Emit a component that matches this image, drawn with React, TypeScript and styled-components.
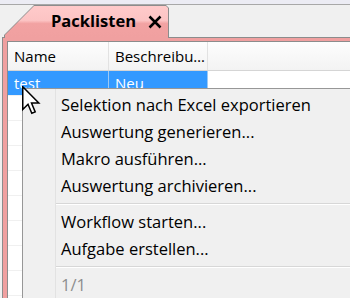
import styled, { createGlobalStyle } from "styled-components";

const GlobalStyle = createGlobalStyle`
  html, body {
    margin: 0;
    padding: 0;
    background: #f0f0f0;
    overflow: hidden;
  }
  body {
    width: 350px;
    height: 298px;
    font-family: "Open Sans", "Noto Sans", sans-serif;
  }
`;

const Screen = styled.div`
  position: relative;
  width: 350px;
  height: 298px;
  overflow: hidden;
  background: #f0f0f0;
`;

const TopStrip = styled.div`
  height: 4px;
  background: #ececf4;
  border-bottom: 1px solid #a8a8a8;
`;

const TabBar = styled.div`
  display: flex;
  align-items: flex-end;
  height: 32px;
  padding-left: 4px;
`;

const Tab = styled.div`
  position: relative;
  z-index: 2;
  width: 165px;
  height: 33px;
  margin-bottom: -1px;
  background: #8c8c8c;
  clip-path: polygon(0 30px, 30px 0, 162px 0, 165px 3px, 165px 100%, 0 100%);
`;

const TabFace = styled.div`
  position: absolute;
  inset: 1px 1px 0 1px;
  display: flex;
  align-items: center;
  padding-left: 46px;
  gap: 12px;
  background: linear-gradient(#ffcaca 0%, #fcc4c4 45%, #f2a2a2 55%, #f0a0a0 100%);
  clip-path: polygon(0 29px, 29px 0, 161px 0, 163px 2px, 163px 100%, 0 100%);
`;

const TabTitle = styled.span`
  font-weight: 700;
  font-size: 16.5px;
  color: #000;
  line-height: 1;
  padding-bottom: 1px;
`;

const CloseIcon = styled.svg`
  width: 14px;
  height: 14px;
`;

const Panel = styled.div`
  margin-left: 2px;
  height: 260px;
  border: 1px solid #8c8c8c;
  border-right: none;
  border-bottom: none;
  background: #f0a0a0;
  padding: 3px 0 0 4px;
`;

const Grid = styled.div`
  height: 100%;
  background: #fff;
  border-top: 1px solid #8c8c8c;
  border-left: 1px solid #8c8c8c;
`;

const Row = styled.div<{ $header?: boolean }>`
  display: grid;
  grid-template-columns: 101px 99px 1fr;
  height: ${(p) => (p.$header ? 29 : 25)}px;
  box-sizing: border-box;
  border-bottom: 1px solid ${(p) => (p.$header ? "#d5d5d5" : "#f0f0f0")};
  background: ${(p) => (p.$header ? "linear-gradient(#fdfdfd, #f3f3f3)" : "#fff")};
`;

const Cell = styled.div<{ $selected?: boolean; $header?: boolean }>`
  display: flex;
  align-items: center;
  padding-left: 6px;
  font-size: 15px;
  color: ${(p) => (p.$selected ? "#fff" : "#000")};
  background: ${(p) => (p.$selected ? "#3399ff" : "transparent")};
  border-right: 1px solid ${(p) => (p.$selected ? "#9cc9f5" : p.$header ? "#e2e2e2" : "transparent")};
  white-space: nowrap;
  overflow: hidden;
`;

const Filler = styled.div``;

const Menu = styled.div`
  position: absolute;
  left: 22px;
  top: 88px;
  width: 340px;
  height: 230px;
  background: #f0f0f0;
  border: 1px solid #979797;
  padding-top: 2px;
  box-sizing: border-box;
  &::before {
    content: "";
    position: absolute;
    left: 32px;
    top: 0;
    bottom: 0;
    width: 1px;
    background: #e2e2e2;
  }
`;

const Item = styled.div<{ $disabled?: boolean }>`
  height: 27px;
  display: flex;
  align-items: center;
  padding-left: 38px;
  font-size: 16.5px;
  color: ${(p) => (p.$disabled ? "#8d8d8d" : "#000")};
  white-space: nowrap;
`;

const Separator = styled.div`
  height: 9px;
  display: flex;
  align-items: center;
  padding-left: 33px;
  &::after {
    content: "";
    flex: 1;
    height: 1px;
    background: #d7d7d7;
    box-shadow: 0 1px 0 #fff;
  }
`;

const Cursor = styled.svg`
  position: absolute;
  left: 22px;
  top: 86px;
  width: 19px;
  height: 29px;
  z-index: 5;
`;

export default function App() {
  const rows = Array.from({ length: 9 });
  return (
    <Screen>
      <GlobalStyle />
      <TopStrip />
      <TabBar>
        <Tab>
          <TabFace>
            <TabTitle>Packlisten</TabTitle>
            <CloseIcon viewBox="0 0 14 14">
              <path d="M1.5 1.5 L12.5 12.5 M12.5 1.5 L1.5 12.5" stroke="#000" strokeWidth="2.5" />
            </CloseIcon>
          </TabFace>
        </Tab>
      </TabBar>
      <Panel>
        <Grid>
          <Row $header>
            <Cell $header>Name</Cell>
            <Cell $header>Beschreibu…</Cell>
            <Filler />
          </Row>
          <Row>
            <Cell $selected>test</Cell>
            <Cell $selected>Neu</Cell>
            <Filler />
          </Row>
          {rows.map((_, i) => (
            <Row key={i}>
              <Cell />
              <Cell />
              <Filler />
            </Row>
          ))}
        </Grid>
      </Panel>
      <Menu>
        <Item>Selektion nach Excel exportieren</Item>
        <Item>Auswertung generieren...</Item>
        <Item>Makro ausführen...</Item>
        <Item>Auswertung archivieren...</Item>
        <Separator />
        <Item>Workflow starten...</Item>
        <Item>Aufgabe erstellen...</Item>
        <Separator />
        <Item $disabled>1/1</Item>
      </Menu>
      <Cursor viewBox="0 0 19 29">
        <path
          d="M0.75 0.75 L0.75 23.5 L6 18.3 L9.8 27.3 L13.2 25.9 L9.5 17 L16.8 17 Z"
          fill="#fff"
          stroke="#000"
          strokeWidth="1.5"
          strokeLinejoin="miter"
        />
      </Cursor>
    </Screen>
  );
}
